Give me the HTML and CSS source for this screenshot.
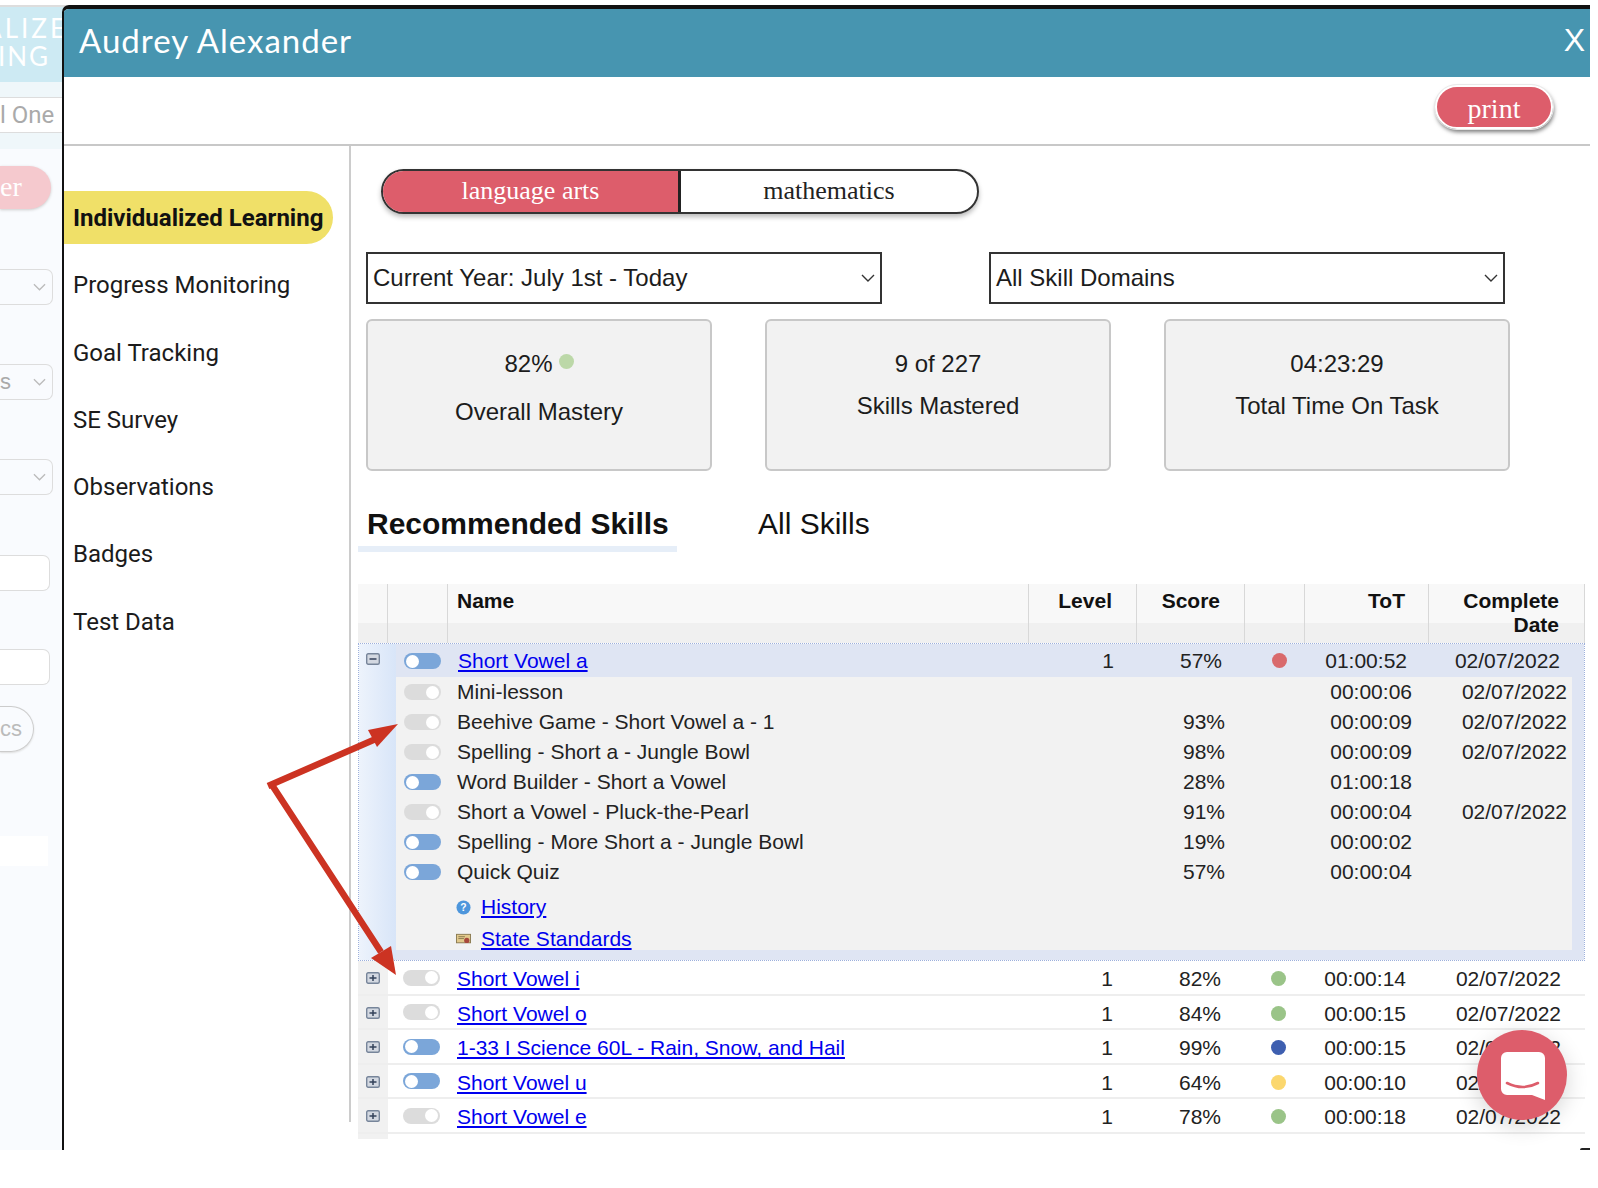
FILE: index.html
```html
<!DOCTYPE html>
<html lang="en">
<head>
<meta charset="utf-8">
<title>Audrey Alexander</title>
<link rel="stylesheet" href="styles.css">
</head>
<body>
<svg class="defs" width="0" height="0" aria-hidden="true">
  <symbol id="plus" viewBox="0 0 14 12"><rect x=".7" y=".7" width="12.6" height="10.6" rx="1.5" fill="#d3d8e1" stroke="#77859a" stroke-width="1.4"/><path d="M3.5 6h7M7 3v6" stroke="#33415a" stroke-width="1.5"/></symbol>
  <symbol id="minus" viewBox="0 0 14 12"><rect x=".7" y=".7" width="12.6" height="10.6" rx="1.5" fill="#d3d8e1" stroke="#77859a" stroke-width="1.4"/><path d="M3.5 6h7" stroke="#33415a" stroke-width="1.5"/></symbol>
  <symbol id="chev" viewBox="0 0 14 8"><path d="M1 1l6 6 6-6" fill="none" stroke="currentColor" stroke-width="1.4"/></symbol>
</svg>
<div class="stage">
  <aside class="backdrop">
    <div class="bd-head"><span class="bd-l1">ALIZE</span><span class="bd-l2">ING</span></div>
    <div class="bd-band"><div class="bd-input">l One</div></div>
    <div class="bd-pink">er</div>
    <div class="bd-select bd-s1"><svg class="bd-chev"><use href="#chev"/></svg></div>
    <div class="bd-select bd-s2"><span>s</span><svg class="bd-chev"><use href="#chev"/></svg></div>
    <div class="bd-select bd-s2"><svg class="bd-chev"><use href="#chev"/></svg></div>
    <div class="bd-select bd-s3"></div>
    <div class="bd-select bd-s4"></div>
    <div class="bd-pill">cs</div>
    <div class="bd-faint"></div>
  </aside>
  <section class="modal">
    <header class="m-head"><h1>Audrey Alexander</h1><span class="m-x">X</span></header>
    <div class="m-sub"><button class="print">print</button></div>
    <div class="m-main">
      <nav class="side">
        <a class="side-item active">Individualized Learning</a>
        <a class="side-item">Progress Monitoring</a>
        <a class="side-item">Goal Tracking</a>
        <a class="side-item">SE Survey</a>
        <a class="side-item">Observations</a>
        <a class="side-item">Badges</a>
        <a class="side-item">Test Data</a>
      </nav>
      <div class="content">
        <div class="subject"><span class="sub-on">language arts</span><span class="sub-off">mathematics</span></div>
        <div class="filters">
          <div class="select"><span>Current Year: July 1st - Today</span><svg class="chev"><use href="#chev"/></svg></div>
          <div class="select"><span>All Skill Domains</span><svg class="chev"><use href="#chev"/></svg></div>
        </div>
        <div class="cards">
          <div class="card"><div class="c-top">82%<i class="c-dot"></i></div><div class="c-bot far">Overall Mastery</div></div>
          <div class="card"><div class="c-top">9 of 227</div><div class="c-bot">Skills Mastered</div></div>
          <div class="card"><div class="c-top">04:23:29</div><div class="c-bot">Total Time On Task</div></div>
        </div>
        <div class="tabs"><span class="tab on">Recommended Skills</span><span class="tab">All Skills</span></div>
        <div class="table">
          <div class="thead">
            <div class="th"></div><div class="th"></div><div class="th left">Name</div><div class="th">Level</div><div class="th">Score</div><div class="th"></div><div class="th">ToT</div><div class="th">Complete<br>Date</div>
          </div>
          <div class="expanded">
            <div class="gutter"><svg class="tree"><use href="#minus"/></svg></div>
            <div class="exp-body">
              <div class="exp-row">
                <div class="tcell"><i class="tog on"></i></div>
                <div class="name"><a href="#">Short Vowel a</a></div>
                <div class="num lv">1</div><div class="num sc">57%</div><div class="dotc"><i class="dot red"></i></div><div class="num tt">01:00:52</div><div class="num dt">02/07/2022</div>
              </div>
              <div class="panel">
                <div class="kids">
                  <div class="kid"><div class="tcell"><i class="tog"></i></div><div class="kname">Mini-lesson</div><div></div><div class="num"></div><div></div><div class="num kt">00:00:06</div><div class="num kd">02/07/2022</div></div>
                  <div class="kid"><div class="tcell"><i class="tog"></i></div><div class="kname">Beehive Game - Short Vowel a - 1</div><div></div><div class="num ks">93%</div><div></div><div class="num kt">00:00:09</div><div class="num kd">02/07/2022</div></div>
                  <div class="kid"><div class="tcell"><i class="tog"></i></div><div class="kname">Spelling - Short a - Jungle Bowl</div><div></div><div class="num ks">98%</div><div></div><div class="num kt">00:00:09</div><div class="num kd">02/07/2022</div></div>
                  <div class="kid"><div class="tcell"><i class="tog on"></i></div><div class="kname">Word Builder - Short a Vowel</div><div></div><div class="num ks">28%</div><div></div><div class="num kt">01:00:18</div><div class="num kd"></div></div>
                  <div class="kid"><div class="tcell"><i class="tog"></i></div><div class="kname">Short a Vowel - Pluck-the-Pearl</div><div></div><div class="num ks">91%</div><div></div><div class="num kt">00:00:04</div><div class="num kd">02/07/2022</div></div>
                  <div class="kid"><div class="tcell"><i class="tog on"></i></div><div class="kname">Spelling - More Short a - Jungle Bowl</div><div></div><div class="num ks">19%</div><div></div><div class="num kt">00:00:02</div><div class="num kd"></div></div>
                  <div class="kid"><div class="tcell"><i class="tog on"></i></div><div class="kname">Quick Quiz</div><div></div><div class="num ks">57%</div><div></div><div class="num kt">00:00:04</div><div class="num kd"></div></div>
                </div>
                <div class="more">
                  <svg class="m-ic" viewBox="0 0 16 16"><circle cx="8" cy="8" r="7.5" fill="#4d96dc"/><text x="8" y="12" text-anchor="middle" class="q">?</text></svg>
                  <a href="#">History</a>
                </div>
                <div class="more">
                  <svg class="m-ic" viewBox="0 0 16 12"><rect x=".5" y=".5" width="15" height="9" fill="#e2c98c" stroke="#8a7a50"/><path d="M2.5 3h7M2.5 5h6" stroke="#8a7a50"/><circle cx="11.5" cy="7" r="2.8" fill="#a8483c"/></svg>
                  <a href="#">State Standards</a>
                </div>
              </div>
            </div>
          </div>
          <div class="row"><div class="r-g"><svg class="tree"><use href="#plus"/></svg></div><div class="r-t"><i class="tog"></i></div><div class="name"><a href="#">Short Vowel i</a></div><div class="num lv">1</div><div class="num sc">82%</div><div class="dotc"><i class="dot green"></i></div><div class="num tt">00:00:14</div><div class="num dt">02/07/2022</div></div>
          <div class="row"><div class="r-g"><svg class="tree"><use href="#plus"/></svg></div><div class="r-t"><i class="tog"></i></div><div class="name"><a href="#">Short Vowel o</a></div><div class="num lv">1</div><div class="num sc">84%</div><div class="dotc"><i class="dot green"></i></div><div class="num tt">00:00:15</div><div class="num dt">02/07/2022</div></div>
          <div class="row"><div class="r-g"><svg class="tree"><use href="#plus"/></svg></div><div class="r-t"><i class="tog on"></i></div><div class="name"><a href="#">1-33 I Science 60L - Rain, Snow, and Hail</a></div><div class="num lv">1</div><div class="num sc">99%</div><div class="dotc"><i class="dot blue"></i></div><div class="num tt">00:00:15</div><div class="num dt">02/07/2022</div></div>
          <div class="row"><div class="r-g"><svg class="tree"><use href="#plus"/></svg></div><div class="r-t"><i class="tog on"></i></div><div class="name"><a href="#">Short Vowel u</a></div><div class="num lv">1</div><div class="num sc">64%</div><div class="dotc"><i class="dot yellow"></i></div><div class="num tt">00:00:10</div><div class="num dt">02/07/2022</div></div>
          <div class="row"><div class="r-g"><svg class="tree"><use href="#plus"/></svg></div><div class="r-t"><i class="tog"></i></div><div class="name"><a href="#">Short Vowel e</a></div><div class="num lv">1</div><div class="num sc">78%</div><div class="dotc"><i class="dot green"></i></div><div class="num tt">00:00:18</div><div class="num dt">02/07/2022</div></div>
          <div class="tail"></div>
        </div>
      </div>
    </div>
  </section>
  <svg class="arrows" viewBox="0 0 1598 1188">
    <path d="M268 786L378 738M272 785L381 952" fill="none" stroke="#cc3322" stroke-width="6.5"/>
    <path d="M398 724L368 730L377 747Z" fill="#cc3322"/>
    <path d="M396 975L371 958L391 946Z" fill="#cc3322"/>
  </svg>
  <div class="chat">
    <svg viewBox="0 0 44 48" class="chat-ic"><path d="M6 0H38A6 6 0 0 1 44 6V48L31 43H6A6 6 0 0 1 0 37V6A6 6 0 0 1 6 0Z" fill="#fff"/><path d="M6 31Q22 39 37 31" fill="none" stroke="#dd5d6b" stroke-width="2.6" stroke-linecap="round"/></svg>
  </div>
</div>
</body>
</html>
```
FILE: styles.css
```css
* { box-sizing: border-box; }
html, body { margin: 0; background: #fff; }
body { font-family: "Liberation Sans", Arial, sans-serif; color: #1c1c1c; }
.defs { position: absolute; }
.stage { position: relative; width: 1598px; height: 1188px; padding-top: 5px; overflow: hidden; display: flex; align-items: flex-start; }

/* dimmed page behind the dialog */
.backdrop { width: 66px; margin-right: -4px; height: 1145px; flex: none; background: #f9fbfe; border-top: 2px solid #ddd; overflow: hidden; }
.bd-head { height: 75px; background: #cdeaf3; color: #fff; font: 400 26px/28px Lato, sans-serif; display: flex; flex-direction: column; align-items: flex-end; justify-content: center; padding-bottom: 5px; }
.bd-l1 { margin-right: -2px; letter-spacing: 3px; white-space: nowrap; }
.bd-l2 { margin-right: 16px; letter-spacing: 2px; }
.bd-band { background: #eff7fa; padding: 15px 0 16px; }
.bd-input { height: 36px; background: #fff; border-top: 1px solid #ddd; border-bottom: 1px solid #ddd; text-align: right; color: #aaa; font: 24px/35px Roboto, sans-serif; padding-right: 17px; white-space: nowrap; }
.bd-pink { width: 51px; height: 43px; margin-top: 17px; background: #f5c9ce; border-radius: 0 22px 22px 0; color: #fff; font: 28px/42px "Liberation Serif", serif; box-shadow: 0 1px 3px #ccc; }
.bd-select { width: 53px; height: 36px; border: 1px solid #ddd; border-left: 0; border-radius: 0 7px 7px 0; display: flex; align-items: center; justify-content: flex-end; color: #aaa; padding-right: 6px; position: relative; font-size: 22px; }
.bd-select span { position: absolute; left: 0; top: 4px; }
.bd-s1 { margin-top: 60px; }
.bd-s2 { margin-top: 59px; }
.bd-s3 { margin-top: 60px; width: 50px; background: #fff; }
.bd-s4 { margin-top: 58px; width: 50px; background: #fff; }
.bd-chev { width: 13px; height: 8px; color: #bbb; }
.bd-pill { width: 34px; height: 46px; margin-top: 21px; border: 1px solid #ccc; border-left: 0; border-radius: 0 23px 23px 0; color: #bbb; font: 22px/44px "Liberation Sans", sans-serif; box-shadow: 0 1px 2px #ddd; }
.bd-faint { width: 48px; height: 30px; margin-top: 84px; background: #fff; }

/* dialog */
.modal { position: relative; z-index: 1; width: 1528px; flex: none; height: 1145px; border-top: 4px solid #111; border-left: 2px solid #111; border-top-left-radius: 7px; overflow: hidden; background: #fff; }
.modal::after { content: ""; position: absolute; right: 0; bottom: 0; width: 10px; height: 2px; background: #222; border-radius: 4px 0 0 0; }
.m-head { height: 68px; background: #4795b0; color: #fff; display: flex; align-items: center; justify-content: space-between; padding: 0 5px 7px 15px; }
.m-head h1 { margin: 0; font: 400 33px/40px Lato, sans-serif; letter-spacing: 1px; }
.m-x { font: 32px/40px "Liberation Sans", sans-serif; }
.m-sub { height: 69px; border-bottom: 2px solid #c8c8c8; display: flex; justify-content: flex-end; align-items: flex-start; padding: 8px 37px 0 0; }
.print { width: 118px; height: 44px; padding: 3px 0 0; background: #dd5d6b; color: #fff; border: 2px solid #fff; border-radius: 22px; outline: 1px solid #e9e9e9; box-shadow: 1px 3px 4px #777; font: 28px/36px "Liberation Serif", serif; }
.m-main { display: flex; align-items: flex-start; }
.side { width: 287px; height: 976px; flex: none; border-right: 2px solid #ccc; padding-top: 45px; display: flex; flex-direction: column; gap: 14.3px; }
.side-item { width: 269px; height: 53px; padding-left: 9px; font: 24px/54px Roboto, sans-serif; color: #1b1b1b; white-space: nowrap; text-decoration: none; }
.side-item.active { background: #f0e068; border-radius: 0 27px 27px 0; font-weight: 700; color: #111; }
.content { flex: 1; padding-top: 23px; }

.subject { margin-left: 30px; width: 598px; height: 45px; display: flex; border: 2px solid #333; border-radius: 23px; overflow: hidden; box-shadow: 0 3px 5px #bbb; font: 26px/40px "Liberation Serif", serif; }
.sub-on { width: 298px; background: #dd5d6b; color: #fff; text-align: center; border-right: 3px solid #222; }
.sub-off { flex: 1; text-align: center; color: #222; }
.filters { margin: 38px 0 0 15px; display: flex; gap: 107px; }
.select { width: 516px; height: 52px; border: 2px solid #333; display: flex; align-items: center; justify-content: space-between; padding: 0 5px; font-size: 24px; color: #1c1c1c; }
.chev { width: 14px; height: 8px; color: #333; }
.cards { margin: 15px 0 0 15px; display: flex; gap: 53px; }
.card { width: 346px; height: 152px; background: #f2f2f2; border: 2px solid #c8c8c8; border-radius: 6px; padding-top: 29px; text-align: center; font-size: 24px; line-height: 28px; }
.c-bot { margin-top: 14px; }
.c-bot.far { margin-top: 20px; }
.c-dot { display: inline-block; width: 15px; height: 15px; margin-left: 6px; border-radius: 50%; background: #bcd8a8; vertical-align: 3px; }

.tabs { margin: 29px 0 0 7px; display: flex; gap: 81px; font-size: 30px; line-height: 48px; color: #111; }
.tab { height: 52px; }
.tab.on { font-weight: 700; width: 319px; padding-left: 9px; border-bottom: 6px solid #e6eef8; }

.table { margin: 32px 0 0 7px; width: 1227px; font-size: 21px; }
.thead, .row { display: grid; grid-template-columns: 30px 60px 581px 108px 108px 60px 124px 156px; }
.thead { height: 59px; background: linear-gradient(#f8f8f8 66%, #f0f0f0 66%); font-weight: 700; font-size: 21px; line-height: 24px; }
.th { border-right: 1px solid #d8d8d8; padding: 5px 24px 0 0; text-align: right; color: #111; }
.th.left { text-align: left; padding-left: 9px; }
.th:last-child { padding-right: 25px; }
.th:nth-child(7) { padding-right: 23px; }

.expanded { display: flex; height: 318px; border: 1px dotted #9db0dc; }
.gutter { width: 37px; flex: none; background: linear-gradient(90deg, #edf3fc, #d8e5f8); padding: 9px 0 0 7px; }
.tree { display: block; width: 14px; height: 12px; }
.exp-body { flex: 1; background: #dfe5f3; }
.exp-row { height: 38px; padding-bottom: 4px; display: grid; grid-template-columns: 53px 581px 108px 108px 60px 124px 1fr; align-items: center; line-height: 26px; }
.panel { height: 273px; margin-right: 12px; background: #f2f2f2; }
.kids { margin-top: -5px; position: relative; }
.kid { height: 30px; display: grid; grid-template-columns: 53px 581px 108px 108px 60px 124px 1fr; align-items: center; line-height: 26px; }
.tcell { padding-left: 8px; display: flex; }
.tog { display: block; width: 37px; height: 16px; border-radius: 8px; background: #dcdcdc; position: relative; }
.tog::after { content: ""; position: absolute; top: 1.5px; right: 2px; width: 13px; height: 13px; border-radius: 50%; background: #fff; }
.tog.on { background: #7ba6d9; }
.tog.on::after { right: auto; left: 2px; }
.name { padding-left: 9px; white-space: nowrap; }
.kname { padding-left: 8px; white-space: nowrap; color: #222; }
a { color: #0000ee; text-decoration: underline; }
.num { text-align: right; color: #222; }
.lv { padding-right: 24px; }
.sc { padding-right: 24px; }
.tt { padding-right: 23px; }
.dt { padding-right: 24px; }
.ks { padding-right: 21px; }
.kt { padding-right: 18px; }
.kd { padding-right: 5px; }
.dotc { padding-left: 26px; display: flex; }
.dot { display: block; width: 15px; height: 15px; border-radius: 50%; margin-top: -2px; }
.red { background: #d96a6c; }
.green { background: #9ac488; }
.blue { background: #3e5fb0; }
.yellow { background: #fbd76e; }
.more { height: 32px; display: flex; align-items: center; gap: 10px; padding-left: 60px; }
.kids + .more { margin-top: 4px; }
.m-ic { width: 15px; height: 15px; flex: none; }
.q { font: 700 11px "Liberation Sans", sans-serif; fill: #fff; }

.row { height: 34.5px; align-items: center; border-bottom: 2px solid #eee; line-height: 26px; }
.row .name, .row .num { padding-top: 4px; }
.r-g { align-self: stretch; background: #f1f1f1; padding: 11px 0 0 8px; }
.r-t { padding: 4px 0 0 15px; }
.row .tog { margin-top: -3px; }
.row .dotc { padding-top: 5px; }
.tail { width: 30px; height: 5px; background: #f1f1f1; }

/* overlays */
.arrows { position: absolute; inset: 0; z-index: 2; width: 1598px; height: 1188px; pointer-events: none; }
.chat { position: absolute; z-index: 3; left: 1477px; top: 1030px; width: 90px; height: 90px; border-radius: 50%; background: #dd5d6b; box-shadow: 0 6px 22px rgba(0,0,0,.16); display: flex; align-items: center; justify-content: center; padding: 1px 0 0 1px; }
.chat-ic { width: 44px; height: 48px; }
```
